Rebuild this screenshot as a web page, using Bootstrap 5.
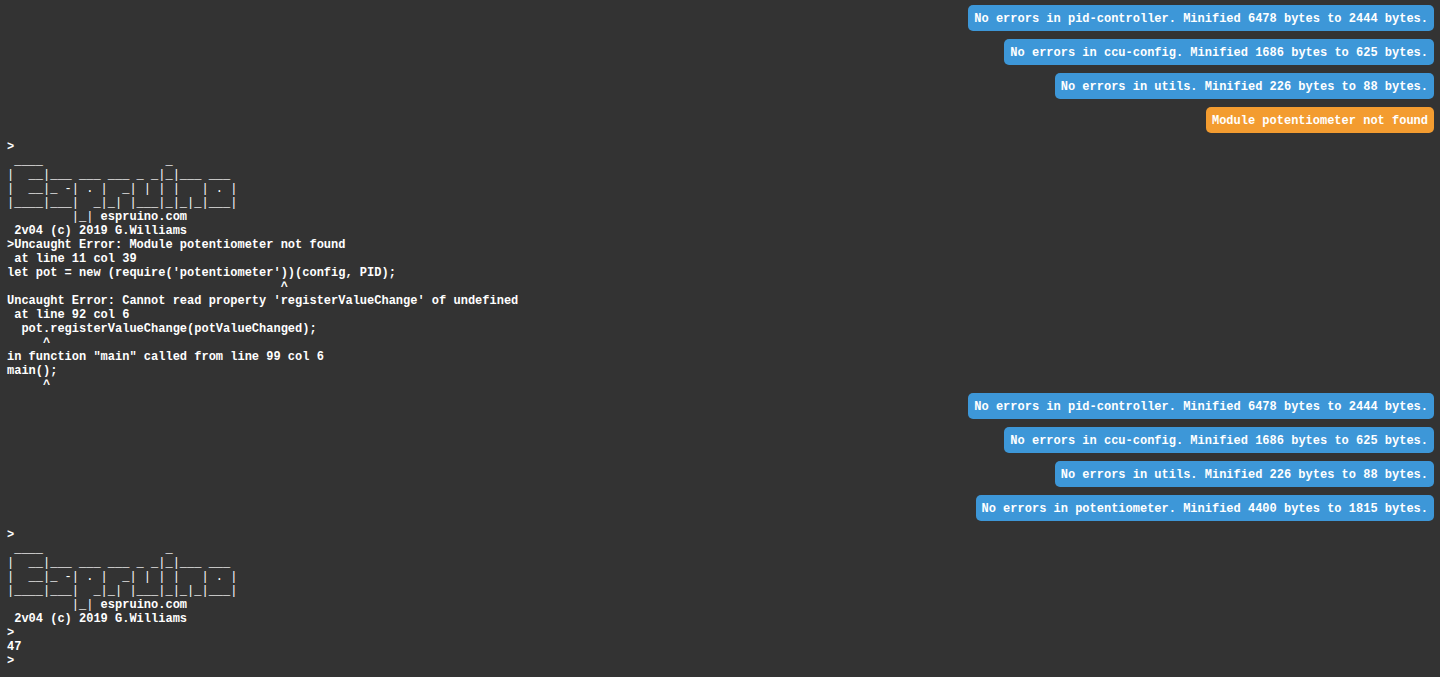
<!DOCTYPE html>
<html lang="en">
<head>
<meta charset="utf-8">
<title>Espruino terminal</title>
<link rel="stylesheet" href="https://cdn.jsdelivr.net/npm/bootstrap@5.3.0/dist/css/bootstrap.min.css">
<style>
html, body { height: 100%; margin: 0; background: #333; overflow: hidden; }
.term-pane { height: 677px; overflow: hidden; background: #333; padding: 0 6px 10px 7px; color: #fff; font: 700 12px/14px "Liberation Mono", "Courier New", monospace; }
.term-lines { white-space: pre; margin: 0 0 -1px; padding-top: 1px; font: inherit; color: inherit; overflow: visible; }
.term-art { font-weight: 400; }
.bubble-stack { gap: 8px; padding: 2px 0 6px; }
.toast-msg { padding: 7px 6px 5px; border-radius: 5px; color: #fff; line-height: 14px; }
.toast-info { background: #3d97d8; }
.toast-warn { background: #f39c30; }
</style>
</head>
<body>
<main class="term-pane d-flex flex-column justify-content-end">
<pre class="term-lines flex-shrink-0"> ^</pre>
<div class="bubble-stack d-flex flex-column align-items-end flex-shrink-0">
  <div class="toast-msg toast-info">No errors in pid-controller. Minified 6478 bytes to 2444 bytes.</div>
  <div class="toast-msg toast-info">No errors in ccu-config. Minified 1686 bytes to 625 bytes.</div>
  <div class="toast-msg toast-info">No errors in utils. Minified 226 bytes to 88 bytes.</div>
  <div class="toast-msg toast-warn">Module potentiometer not found</div>
</div>
<pre class="term-lines flex-shrink-0">&gt;
<span class="term-art"> ____                 _
|  __|___ ___ ___ _ _|_|___ ___
|  __|_ -| . |  _| | | |   | . |
|____|___|  _|_| |___|_|_|_|___|
         |_|</span> espruino.com
 2v04 (c) 2019 G.Williams
&gt;Uncaught Error: Module potentiometer not found
 at line 11 col 39
let pot = new (require('potentiometer'))(config, PID);
                                      ^
Uncaught Error: Cannot read property 'registerValueChange' of undefined
 at line 92 col 6
  pot.registerValueChange(potValueChanged);
     ^
in function "main" called from line 99 col 6
main();
     ^</pre>
<div class="bubble-stack d-flex flex-column align-items-end flex-shrink-0">
  <div class="toast-msg toast-info">No errors in pid-controller. Minified 6478 bytes to 2444 bytes.</div>
  <div class="toast-msg toast-info">No errors in ccu-config. Minified 1686 bytes to 625 bytes.</div>
  <div class="toast-msg toast-info">No errors in utils. Minified 226 bytes to 88 bytes.</div>
  <div class="toast-msg toast-info">No errors in potentiometer. Minified 4400 bytes to 1815 bytes.</div>
</div>
<pre class="term-lines flex-shrink-0">&gt;
<span class="term-art"> ____                 _
|  __|___ ___ ___ _ _|_|___ ___
|  __|_ -| . |  _| | | |   | . |
|____|___|  _|_| |___|_|_|_|___|
         |_|</span> espruino.com
 2v04 (c) 2019 G.Williams
&gt;
47
&gt;</pre>
</main>
<script src="https://cdn.jsdelivr.net/npm/bootstrap@5.3.0/dist/js/bootstrap.bundle.min.js"></script>
</body>
</html>
